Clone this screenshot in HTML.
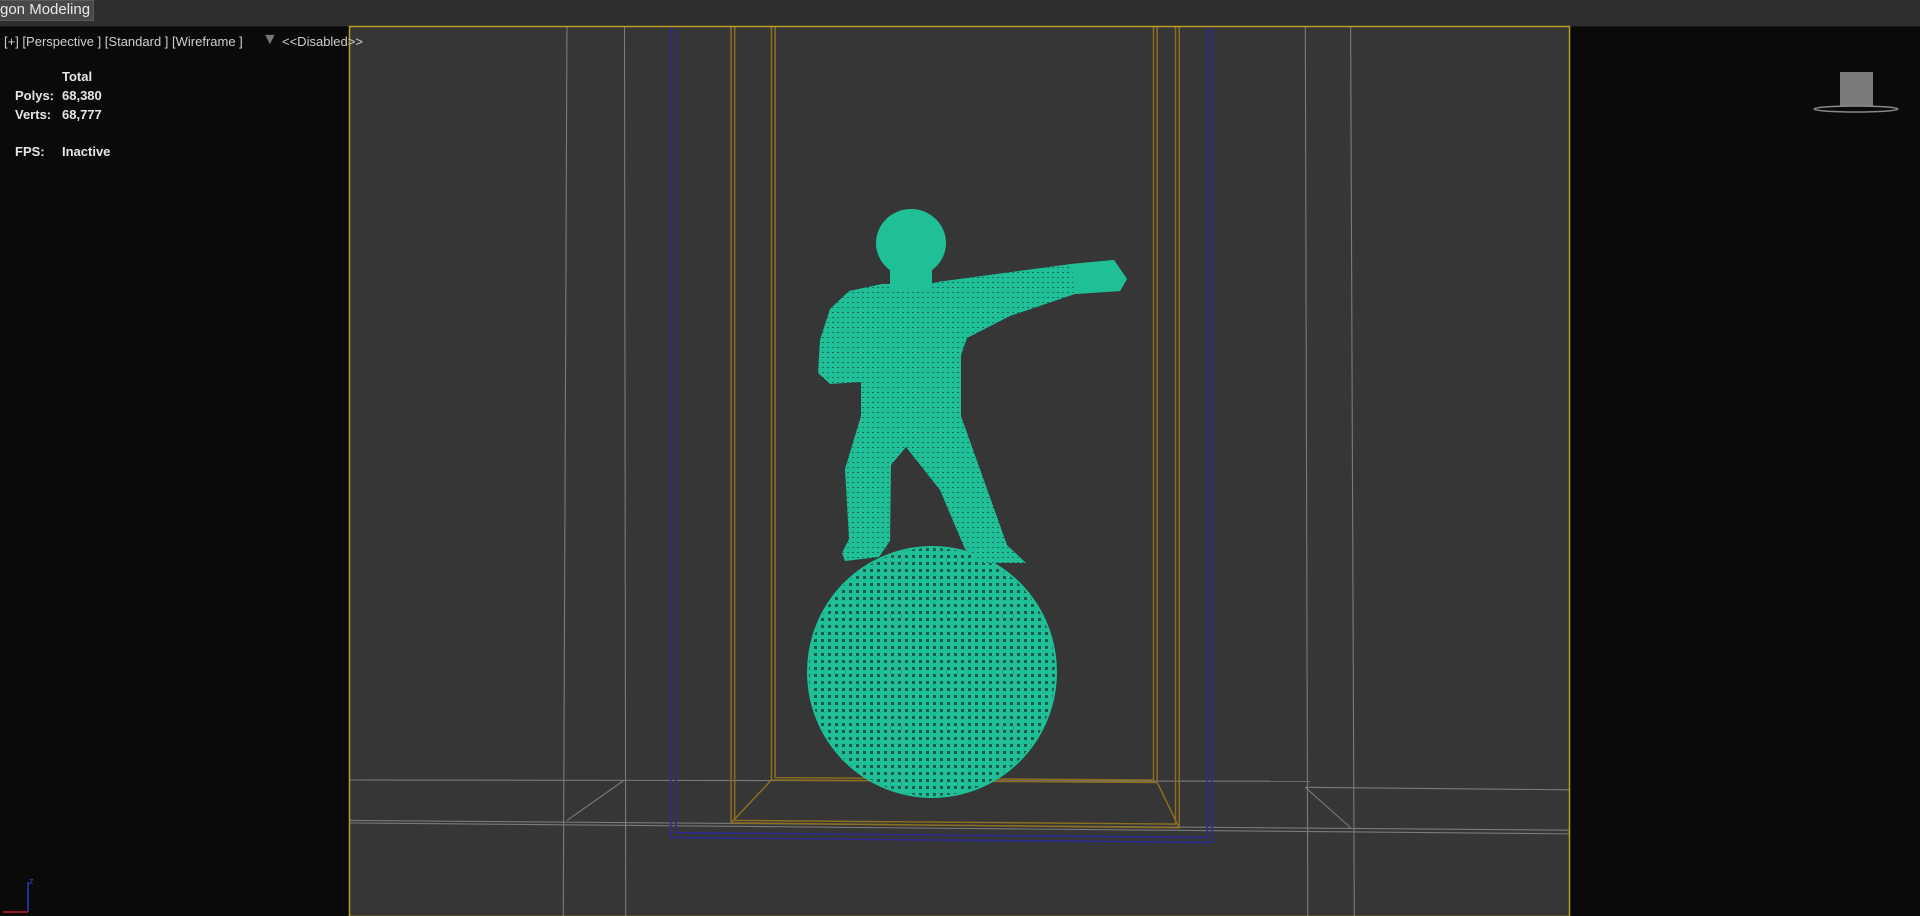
<!DOCTYPE html>
<html><head><meta charset="utf-8"><style>
html,body{margin:0;padding:0;width:1920px;height:916px;overflow:hidden;background:#0a0a0a;font-family:"Liberation Sans",sans-serif;}
#top{position:absolute;left:0;top:0;width:1920px;height:26px;background:#2e2e2e;border-bottom:1px solid #1a1a1a;}
#tab{position:absolute;left:0;top:0;width:93px;height:19px;background:#484848;border:1px solid #5a5a5a;border-left:none;color:#e8e8e8;font-size:15px;line-height:18px;white-space:nowrap;overflow:hidden;}
.t{position:absolute;color:#cfcfcf;font-size:13px;white-space:nowrap;}
.b{position:absolute;color:#e6e6e6;font-size:13px;font-weight:bold;white-space:nowrap;}
svg{position:absolute;left:0;top:0;}
</style></head><body>
<div id="top"><div id="tab">gon Modeling</div></div>
<svg width="1920" height="916" viewBox="0 0 1920 916">
<rect x="349" y="26" width="1221" height="890" fill="#363636"/>
<g transform="scale(1.2245)" fill="none" stroke-width="0.9">
<g stroke="#7a7a7a">
<line x1="463" y1="22" x2="460" y2="748"/><line x1="510" y1="22" x2="511" y2="748"/>
<line x1="1066" y1="22" x2="1068" y2="748"/><line x1="1103" y1="22" x2="1106" y2="748"/>
<line x1="285" y1="637" x2="1070" y2="638"/><line x1="1066" y1="643" x2="1282" y2="645"/>
<line x1="285" y1="670" x2="1282" y2="678"/><line x1="285" y1="672" x2="1282" y2="681"/>
<line x1="463" y1="670" x2="510" y2="637"/><line x1="1066" y1="643" x2="1103" y2="676"/>
</g>
<g stroke="#8c7020" stroke-width="1.2">
<polyline points="630,22 630,637 945,639 945,22"/><polyline points="633,22 633,635 942,637 942,22"/>
<polyline points="597,22 597,672 963,676 963,22"/><polyline points="600,22 600,670 960,673 960,22"/>
<line x1="630" y1="637" x2="597" y2="672"/><line x1="945" y1="639" x2="963" y2="676"/>
</g>
<g stroke="#2c2c92" stroke-width="1.3">
<polyline points="548,22 548,684 990,688 990,22"/><polyline points="552,22 552,680 986,684 986,22"/>
</g>
</g>
<rect x="349.5" y="26.5" width="1220" height="890" fill="none" stroke="#b8a020" stroke-width="1.5"/>
<defs><pattern id="m" width="5" height="5" patternUnits="userSpaceOnUse"><rect width="5" height="5" fill="#1fbf97"/><rect x="2" y="2" width="2" height="1" fill="#1a6f5a"/></pattern>
<pattern id="s" width="7" height="7" patternUnits="userSpaceOnUse"><rect width="7" height="7" fill="#1fbf97"/><rect x="2" y="2" width="3" height="3" fill="#1e5a4b"/></pattern></defs>
<ellipse cx="932" cy="672" rx="124" ry="125" fill="url(#s)"/>
<ellipse cx="932" cy="672" rx="124" ry="125" fill="none" stroke="#1fbf97" stroke-width="2"/>
<path fill="url(#m)" d="M849,291 L830,309 L820,340 L818,373 L830,384 L861,382 L861,416 L845,469 L849,539 L842,553 L845,561 L879,557 L890,541 L891,465 L906,447 L940,490 L965,549 L980,563 L1026,563 L1007,545 L961,416 L961,355 L967,338 L1010,316 L1075,294 L1120,291 L1127,279 L1114,260 L1071,264 L937,282 L931,284 L882,284 Z"/>
<ellipse cx="911" cy="243" rx="35" ry="34" fill="#1fbf97"/>
<rect x="890" y="268" width="42" height="20" fill="#1fbf97"/>
<path fill="#1fbf97" d="M1075,294 L1120,291 L1127,279 L1114,260 L1071,264 Z"/>
<rect x="1840" y="72" width="33" height="34" fill="#7a7a7a"/>
<ellipse cx="1856" cy="109" rx="42" ry="3" fill="none" stroke="#888" stroke-width="1.5"/>
<line x1="28" y1="912" x2="28" y2="882" stroke="#2a3cc0" stroke-width="1.5"/>
<line x1="28" y1="912" x2="3" y2="912" stroke="#c02020" stroke-width="1.5"/>
</svg>
<div class="t" style="left:4px;top:34px;">[+] [Perspective ] [Standard ] [Wireframe ]</div>
<div class="t" style="left:262px;top:31px;color:#777;font-size:16px;">&#9660;</div>
<div class="t" style="left:282px;top:34px;">&lt;&lt;Disabled&gt;&gt;</div>
<div class="b" style="left:62px;top:69px;">Total</div>
<div class="b" style="left:15px;top:88px;">Polys:</div><div class="b" style="left:62px;top:88px;">68,380</div>
<div class="b" style="left:15px;top:107px;">Verts:</div><div class="b" style="left:62px;top:107px;">68,777</div>
<div class="b" style="left:15px;top:144px;">FPS:</div><div class="b" style="left:62px;top:144px;">Inactive</div>
<div class="t" style="left:29px;top:876px;font-size:9px;color:#3040d0;">z</div>
</body></html>
